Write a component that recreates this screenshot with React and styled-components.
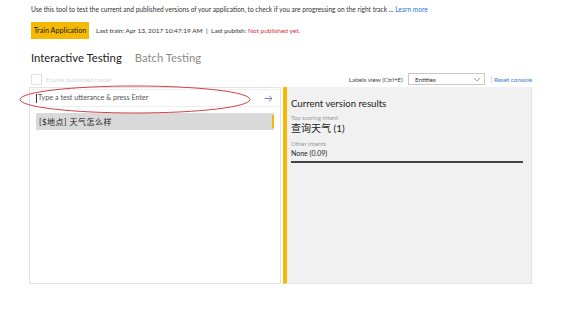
import React from "react";
import styled, { createGlobalStyle } from "styled-components";

const Global = createGlobalStyle`
  html, body { margin: 0; padding: 0; background: #fff; }
  body { font-family: "Lato", "Noto Sans CJK SC", sans-serif; color: #222; }
`;

const Page = styled.div`
  position: relative;
  width: 576px;
  height: 309px;
  padding: 4px 0 0 31px;
  box-sizing: border-box;
`;

const Intro = styled.div`
  font-size: 6.6px;
  line-height: 10px;
  color: #333;
  white-space: nowrap;
`;

const Link = styled.span`
  color: #2a7bd3;
`;

const TrainRow = styled.div`
  display: flex;
  align-items: center;
  gap: 7px;
  margin-top: 8px;
  height: 17px;
`;

const TrainButton = styled.div`
  background: #f4b900;
  color: #222;
  font-size: 7.2px;
  height: 17px;
  width: 58px;
  display: flex;
  align-items: center;
  justify-content: center;
  white-space: nowrap;
`;

const Status = styled.div`
  font-size: 6.5px;
  color: #333;
  white-space: nowrap;
`;

const Red = styled.span`
  color: #e0303a;
`;

const Tabs = styled.div`
  display: flex;
  gap: 13px;
  margin-top: 10px;
  height: 16px;
  align-items: center;
`;

const Tab = styled.div`
  font-size: 11.3px;
  color: ${(p) => (p.$active ? "#222" : "#8a8a8a")};
`;

const Controls = styled.div`
  display: flex;
  align-items: center;
  justify-content: space-between;
  width: 501px;
  margin-top: 7px;
  height: 14px;
`;

const CheckLabel = styled.div`
  display: flex;
  align-items: center;
  gap: 4px;
  font-size: 6.3px;
  color: #d8d8d8;
`;

const Box = styled.div`
  width: 9px;
  height: 9px;
  border: 1px solid #e2e2e2;
`;

const RightControls = styled.div`
  display: flex;
  align-items: center;
  font-size: 6.3px;
  color: #444;
`;

const Select = styled.div`
  margin-left: 5px;
  width: 77px;
  height: 12px;
  box-sizing: border-box;
  border: 1px solid #c8c8c8;
  display: flex;
  align-items: center;
  justify-content: space-between;
  padding: 0 3px 0 6px;
  color: #333;
`;

const Reset = styled.div`
  margin-left: 6px;
  color: #3b82d0;
  border-left: 1px solid #ddd;
  padding-left: 2px;
`;

const Panels = styled.div`
  display: flex;
  gap: 2px;
  margin-left: -2px;
  margin-top: 1px;
  width: 503px;
  height: 197px;
`;

const LeftPanel = styled.div`
  width: 252px;
  box-sizing: border-box;
  border: 1px solid #e3e3e3;
  padding: 1px 1px 0 1px;
  background: #fff;
`;

const InputBar = styled.div`
  height: 16px;
  border-bottom: 1px solid #eee;
  border-top: 1px solid #eee;
  display: flex;
  align-items: center;
  justify-content: space-between;
  padding: 0 6px 0 5px;
  font-size: 7.2px;
  color: #555;
`;

const Caret = styled.span`
  display: inline-block;
  width: 1px;
  height: 9px;
  background: #333;
  margin-right: 1px;
  vertical-align: middle;
`;

const Utterance = styled.div`
  margin: 6px 5px 0 5px;
  height: 17px;
  background: #d9d9d9;
  display: flex;
  align-items: center;
  padding-left: 3px;
  font-size: 8px;
  letter-spacing: 0.5px;
  color: #222;
  position: relative;
`;

const Marker = styled.div`
  position: absolute;
  right: 0;
  top: 2px;
  width: 2px;
  height: 13px;
  background: #f4b900;
`;

const RightPanel = styled.div`
  flex: 1;
  background: #f1f1f1;
  border-left: 4px solid #f4b900;
  border-right: 1px solid #e3e3e3;
  border-bottom: 1px solid #e3e3e3;
  padding: 10px 8px 0 4px;
  box-sizing: border-box;
`;

const Title = styled.div`
  font-size: 9.6px;
  color: #222;
  line-height: 13px;
`;

const Small = styled.div`
  font-size: 6px;
  color: #999;
  margin-top: ${(p) => p.$mt || 0}px;
  line-height: 8px;
`;

const Intent = styled.div`
  font-size: 10px;
  line-height: 13px;
  color: #222;
`;

const Other = styled.div`
  font-size: 7px;
  color: #222;
  line-height: 10px;
`;

const Rule = styled.div`
  margin-top: 3px;
  height: 1.5px;
  background: #444;
`;

const Ellipse = styled.svg`
  position: absolute;
  left: 18px;
  top: 84px;
  pointer-events: none;
`;

export default function App() {
  return (
    <>
      <Global />
      <Page>
        <Intro>
          Use this tool to test the current and published versions of your application, to check if you are progressing on the right track ... <Link>Learn more</Link>
        </Intro>
        <TrainRow>
          <TrainButton>Train Application</TrainButton>
          <Status>
            Last train: Apr 13, 2017 10:47:19 AM &nbsp;|&nbsp; Last publish: <Red>Not published yet.</Red>
          </Status>
        </TrainRow>
        <Tabs>
          <Tab $active>Interactive Testing</Tab>
          <Tab>Batch Testing</Tab>
        </Tabs>
        <Controls>
          <CheckLabel>
            <Box />
            Enable published model
          </CheckLabel>
          <RightControls>
            Labels view (Ctrl+E)
            <Select>
              <span>Entities</span>
              <svg width="8" height="5" viewBox="0 0 8 5">
                <path d="M1 1 L4 4 L7 1" fill="none" stroke="#888" strokeWidth="0.8" />
              </svg>
            </Select>
            <Reset>Reset console</Reset>
          </RightControls>
        </Controls>
        <Panels>
          <LeftPanel>
            <InputBar>
              <span>
                <Caret />Type a test utterance &amp; press Enter
              </span>
              <svg width="9" height="7" viewBox="0 0 9 7">
                <path d="M0.5 3.5 H8 M5 0.7 L8 3.5 L5 6.3" fill="none" stroke="#7b6fd6" strokeWidth="0.9" />
              </svg>
            </InputBar>
            <Utterance>
              [$地点] 天气怎么样
              <Marker />
            </Utterance>
          </LeftPanel>
          <RightPanel>
            <Title>Current version results</Title>
            <Small $mt={4}>Top scoring intent</Small>
            <Intent>查询天气 (1)</Intent>
            <Small $mt={5}>Other intents</Small>
            <Other>None (0.09)</Other>
            <Rule />
          </RightPanel>
        </Panels>
        <Ellipse width="236" height="32" viewBox="0 0 236 32">
          <ellipse cx="117" cy="15.5" rx="115" ry="13.5" fill="none" stroke="#d0434b" strokeWidth="1" />
        </Ellipse>
      </Page>
    </>
  );
}
